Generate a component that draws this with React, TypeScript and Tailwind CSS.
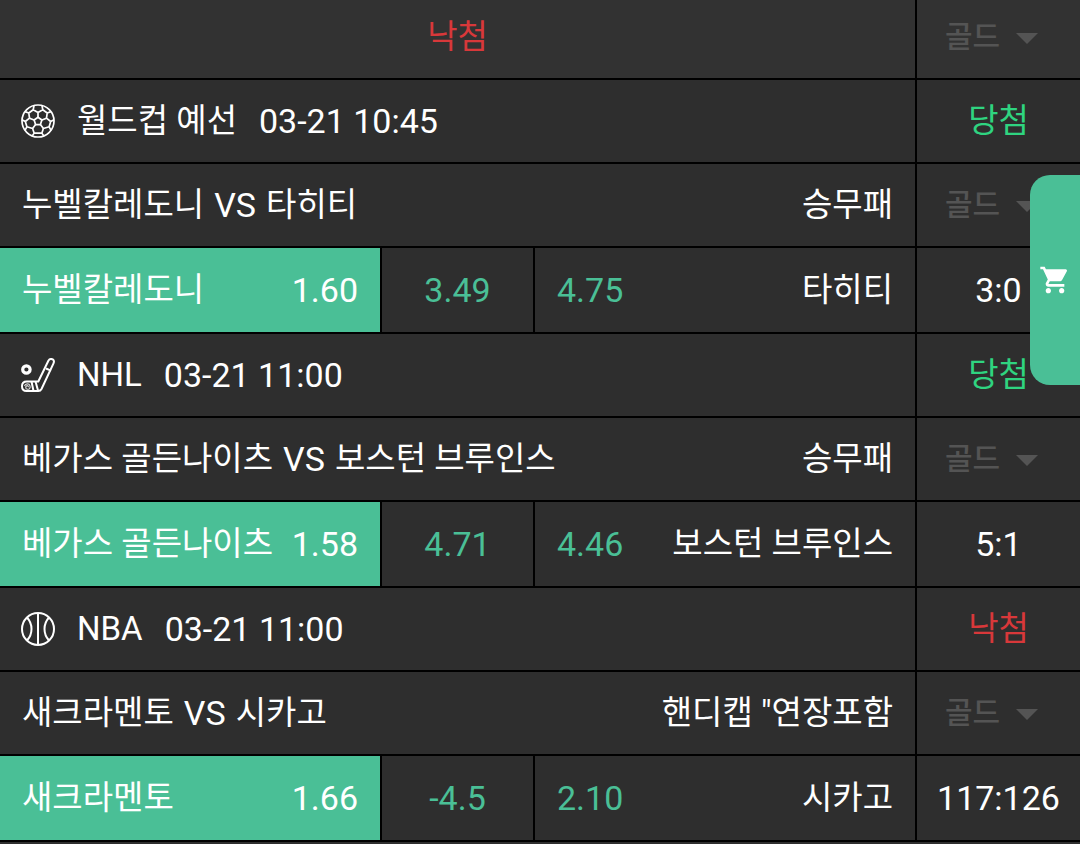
import { useState } from 'react';
import { MdShoppingCart } from 'react-icons/md';

type Result = 'win' | 'lose';
type Sport = 'soccer' | 'hockey' | 'basketball';

interface Match {
    id: string;
    sport: Sport;
    league: string;
    time: string;
    home: string;
    away: string;
    market: string;
    odds: [string, string, string];
    score: string;
    result: Result;
}

const matches: Match[] = [
    { id: 'm1', sport: 'soccer', league: '월드컵 예선', time: '03-21 10:45', home: '누벨칼레도니', away: '타히티', market: '승무패', odds: ['1.60', '3.49', '4.75'], score: '3:0', result: 'win' },
    { id: 'm2', sport: 'hockey', league: 'NHL', time: '03-21 11:00', home: '베가스 골든나이츠', away: '보스턴 브루인스', market: '승무패', odds: ['1.58', '4.71', '4.46'], score: '5:1', result: 'win' },
    { id: 'm3', sport: 'basketball', league: 'NBA', time: '03-21 11:00', home: '새크라멘토', away: '시카고', market: '핸디캡 "연장포함', odds: ['1.66', '-4.5', '2.10'], score: '117:126', result: 'lose' },
];

function SportIcon({ sport }: { sport: Sport }) {
    const common = {
        viewBox: '0 0 34 34',
        className: 'w-[34px] h-[34px] shrink-0',
        fill: 'none',
        stroke: 'currentColor',
        strokeLinejoin: 'round' as const,
        'aria-hidden': true,
    };

    if (sport === 'soccer') {
        return (
            <svg {...common} strokeWidth="1.7">
                <circle cx="17" cy="17" r="16" />
                <path d="M17 13.2l3.9 2.8-1.5 4.600h-4.800L13.100 16z" />
                <path d="M17 13.200V8.500M20.900 16l4.600-1.800M19.400 20.600l3 3.900M14.600 20.600l-3 3.900M13.100 16l-4.600-1.800" />
                <path d="M17 8.500l-4.800-2.700L13 1.500M17 8.500l4.800-2.700L21 1.500M12.200 5.800L7.800 9l.7 5.200-4.200 3.300M21.800 5.800L26.200 9l-.7 5.200 4.200 3.300M7.800 9L4 7.600M26.200 9L30 7.600" />
                <path d="M4.300 17.500L1 15.800M29.700 17.500l3.300-1.700M4.300 17.500l1.600 5.300 5.700 1.700 1.500 4.600h7.800l1.500-4.600 5.700-1.700 1.600-5.300M5.900 22.800l-2 3.600M28.100 22.800l2 3.600M13.100 29.100l-2 3M20.900 29.100l2 3" />
            </svg>
        );
    }
    if (sport === 'hockey') {
        return (
            <svg {...common} strokeWidth="2">
                <circle cx="5.400" cy="11.500" r="3.700" strokeWidth="3.200" />
                <path d="M27.500 2.500c1.200-1.700 3.200-1.900 4.500-.9 1.200 1 1.100 2.400.5 3.700L20.500 31c-.7 1.400-1.700 2-3.200 2H5.500C2.500 33 1 30.800 1 28.200 1 25 3 23.500 5.800 23.500h11.500z" />
                <path d="M25 10.500l5 2.200M10.500 23.500l2 9.500M14.500 23.500l2.500 9" />
                <path d="M3.500 28c.8-2.800 4.800-2.700 5.500-.2s-1 3.700-2.700 3.400-2-2.400-.8-3.200 2.300.3 1.500 1.200" strokeWidth="1.200" opacity=".8" />
            </svg>
        );
    }
    return (
        <svg {...common} strokeWidth="2">
            <circle cx="17" cy="17" r="16" />
            <path d="M17 1v32M6 5.500c6 6.500 6 16.500 0 23M28 5.500c-6 6.500-6 16.500 0 23" />
        </svg>
    );
}

function ResultText({ result }: { result: Result }) {
    return <span className={result === 'win' ? 'text-[#2fd480]' : 'text-[#d8383a]'}>{result === 'win' ? '당첨' : '낙첨'}</span>;
}

function GoldSelect({ name }: { name: string }) {
    return (
        <div className="relative w-[93px]">
            <select name={name} aria-label="골드" disabled className="appearance-none block w-full bg-transparent text-[30px] leading-10 font-medium text-[#545454] opacity-100">
                <option>골드</option>
            </select>
            <svg viewBox="0 0 22 11" className="absolute right-0 top-1/2 w-[22px] h-[11px] -translate-y-1 fill-[#545454] pointer-events-none" aria-hidden="true">
                <path d="M0 0h22L11 11z" />
            </svg>
        </div>
    );
}

function MatchRows({ match }: { match: Match }) {
    const [picked, setPicked] = useState(0);
    const [homeOdds, drawOdds, awayOdds] = match.odds;

    return (
        <section className="grid grid-cols-[minmax(0,1fr)_163px] gap-[2px]">
            <div className="flex items-center gap-[22px] h-[82px] px-[21px] bg-[#2e2e2e]">
                <SportIcon sport={match.sport} />
                <span>{match.league}</span>
                <time className="text-[34px]">{match.time}</time>
            </div>
            <div className="flex items-center justify-center bg-[#2e2e2e]"><ResultText result={match.result} /></div>

            <div className="flex items-center justify-between h-[82px] px-[22px] bg-[#2e2e2e]">
                <h2 className="flex items-center gap-[10px]">
                    <span>{match.home}</span>
                    <span className="text-[34px]">VS</span>
                    <span>{match.away}</span>
                </h2>
                <span>{match.market}</span>
            </div>
            <div className="flex items-center pl-7 bg-[#2e2e2e]"><GoldSelect name={`${match.id}-gold`} /></div>

            <div className="grid grid-cols-[minmax(0,1fr)_151px_minmax(0,1fr)] gap-[2px] h-[84px]">
                <button
                    onClick={() => setPicked(0)}
                    className={`flex items-center justify-between px-[22px] ${picked === 0 ? 'bg-[#4abf96]' : 'bg-[#2e2e2e]'}`}
                >
                    <span>{match.home}</span>
                    <span className={`text-[34px] ${picked === 0 ? 'text-white' : 'text-[#4abf96]'}`}>{homeOdds}</span>
                </button>
                <button
                    onClick={() => setPicked(1)}
                    className={`text-[34px] ${picked === 1 ? 'bg-[#4abf96] text-white' : 'bg-[#2e2e2e] text-[#4abf96]'}`}
                >
                    {drawOdds}
                </button>
                <button
                    onClick={() => setPicked(2)}
                    className={`flex items-center justify-between px-[22px] ${picked === 2 ? 'bg-[#4abf96]' : 'bg-[#2e2e2e]'}`}
                >
                    <span className={`text-[34px] ${picked === 2 ? 'text-white' : 'text-[#4abf96]'}`}>{awayOdds}</span>
                    <span>{match.away}</span>
                </button>
            </div>
            <div className="flex items-center justify-center bg-[#2e2e2e] text-[34px]">{match.score}</div>
        </section>
    );
}

export default function App() {
    return (
        <main className="min-h-screen bg-black text-white text-[33px] leading-10 whitespace-nowrap font-[Roboto,'Noto_Sans_CJK_KR',sans-serif]">
            <div className="flex flex-col gap-[2px]">
                <header className="grid grid-cols-[minmax(0,1fr)_163px] gap-[2px] h-[78px]">
                    <div className="flex items-center justify-center pb-1 bg-[#323232]"><ResultText result="lose" /></div>
                    <div className="flex items-center pl-7 pb-1 bg-[#323232]"><GoldSelect name="total-gold" /></div>
                </header>
                {matches.map((match) => <MatchRows key={match.id} match={match} />)}
                <div className="h-[2px] bg-[#2e2e2e]" />
            </div>

            <button aria-label="장바구니" className="fixed right-0 top-[175px] flex items-center justify-center w-[50px] h-[210px] rounded-l-[20px] bg-[#4abf96]">
                <MdShoppingCart className="w-8 h-8" />
            </button>
        </main>
    );
}
